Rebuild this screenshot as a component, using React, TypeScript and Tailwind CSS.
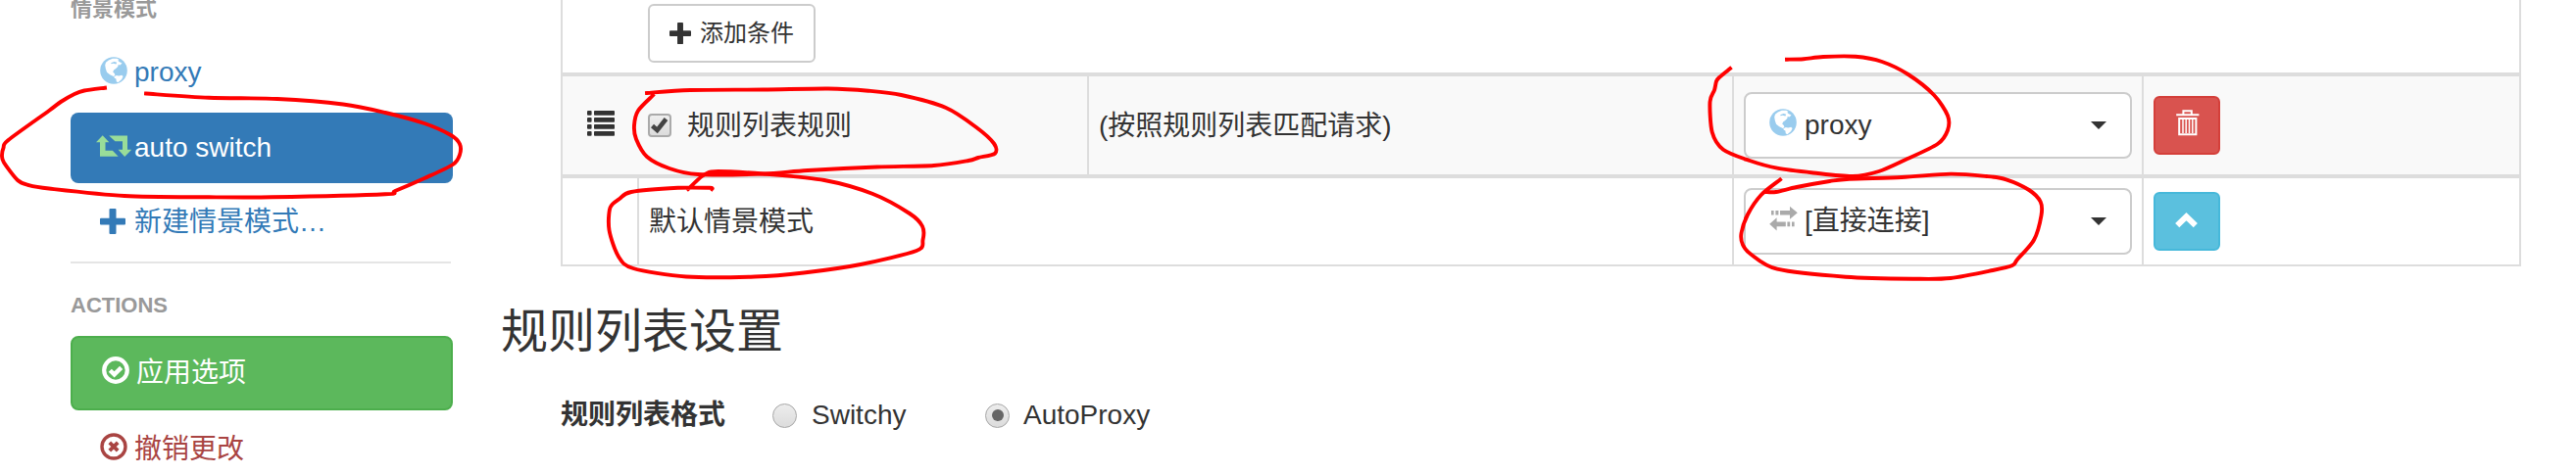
import React from "react";

type Point = [number, number];

function smooth(points: Point[]): string {
  const parts = [`M${points[0][0]} ${points[0][1]}`];
  for (let i = 0; i < points.length - 1; i++) {
    const a = points[Math.max(i - 1, 0)];
    const b = points[i];
    const c = points[i + 1];
    const d = points[Math.min(i + 2, points.length - 1)];
    const k = 7;
    parts.push(
      `C${b[0] + (c[0] - a[0]) / k} ${b[1] + (c[1] - a[1]) / k} ${c[0] - (d[0] - b[0]) / k} ${c[1] - (d[1] - b[1]) / k} ${c[0]} ${c[1]}`
    );
  }
  return parts.join(" ");
}

const marks: Point[][] = [
  [[107, 89.7], [86, 92.5], [76, 96], [62, 104], [50, 113], [8.5, 143], [3.5, 151], [2, 159], [4, 166], [18, 184], [29, 189], [50, 192.5], [127, 200], [213, 201.3], [277, 201.3], [393, 198.3], [403, 195], [433, 182], [462, 168], [469, 158], [469, 147], [460, 138], [433, 126], [393, 115], [350, 106.5], [283, 101], [213, 99.8], [149, 95.5]],
  [[660, 95], [704, 92], [778.5, 91.5], [845, 90.5], [886, 92.7], [919.5, 97], [965, 110], [996, 130], [1014, 146.5], [1015, 156.7], [998, 161], [988, 164], [952.6, 169], [894.6, 170.5], [824, 174], [778.5, 177.5], [712, 178], [683, 172], [660, 160], [649, 142], [647, 128], [651, 113], [666, 97.5]],
  [[702, 193], [716, 180], [725.5, 175.3], [745, 175.3], [778.5, 177.5], [841, 184], [890.5, 198], [928, 218], [941, 231], [941.5, 245], [935, 256], [878, 270], [820, 278.5], [770, 282.5], [700, 282.5], [646, 274], [631, 262], [621.5, 235], [622.5, 212], [632, 203], [644, 196], [691.5, 191.8], [724, 191.8], [726, 193]],
  [[1765, 70], [1754, 79], [1751, 83], [1749, 92], [1744.5, 104], [1746.7, 135], [1758, 152.7], [1785, 164], [1813, 171.7], [1850, 176.5], [1890, 180], [1916.7, 175], [1943, 163.5], [1976.7, 147], [1987, 133], [1987, 118], [1973, 97], [1946.7, 76], [1920, 63], [1893, 57.8], [1860, 58], [1840, 60.3], [1823, 60.7]],
  [[1816, 183.5], [1796.7, 199], [1783, 219], [1776.5, 238], [1778, 250], [1786.7, 260], [1813, 274.7], [1883, 282.7], [1953, 284.7], [1990, 284], [2033, 276], [2053, 271], [2058, 265], [2075, 245], [2082.5, 220], [2081.7, 206], [2070, 194], [2046.7, 183.3], [2026.7, 180], [1990, 177.6], [1940, 181], [1886.7, 182.7], [1866.7, 185], [1833, 191], [1812, 196], [1801, 196]],
];

function Marks() {
  return (
    <svg className="pointer-events-none absolute left-0 top-0" width="2628" height="485" viewBox="0 0 2628 485" fill="none" stroke="#ff0000" strokeWidth="3.9" strokeLinecap="square" strokeLinejoin="round">
      {marks.map((m, i) => (
        <path key={i} d={smooth(m)} />
      ))}
    </svg>
  );
}

function Globe() {
  return (
    <svg className="shrink-0" width="28" height="28" viewBox="0 0 28 28">
      <circle cx="14" cy="14" r="13.8" fill="#99ccee" />
      <path fill="#fff" d="M6 5.8 8.8 3.4l4-1.7 4.6.1L19.6 3l-1.4.8 1.3 1.2 3 1.4-2 2-1.8-.4-.4 2-2.4 2.2-1.8 1.2-.9 2.1 1.6 1.6.6 2-1.6.8-3.6-1.7L7 15.8 5.8 12 5.2 8.4Z" />
      <path fill="#99ccee" d="M11.2 6.2 14.6 5l2.6.8-.8 1.6-2.6-.7-2.2.5Z" />
      <path fill="#fff" d="m14.4 20.2 2.4-1.3 2.4.6 3-.8 1.4 1.4-1.4 3-3.8 3.2-1.6-1-.4-2.7-1.8-1Z" />
    </svg>
  );
}

function Retweet() {
  return (
    <svg className="shrink-0" width="36" height="22" viewBox="0 0 36 22" fill="#99dd99">
      <path d="M6.7.2 13.3 7.3H9.5v8.4h7.3l5.9 6.1H4V7.3H0Z" />
      <path d="M13.2.4H32v14.3h4.2l-7 7.2-6.6-7.2H27V6.3h-7.6Z" />
    </svg>
  );
}

function Plus({ size }: { size: number }) {
  return (
    <svg className="shrink-0" width={size} height={size} viewBox="0 0 26 26" fill="currentColor">
      <path d="M10.5 0h5q1 0 1 1v8.8H25q1 0 1 1v4.6q0 1-1 1h-8.5V25q0 1-1 1h-5q-1 0-1-1v-8.6H1q-1 0-1-1v-4.6q0-1 1-1h8.5V1q0-1 1-1Z" />
    </svg>
  );
}

function Circled({ kind }: { kind: "ok" | "remove" }) {
  return (
    <svg className="shrink-0" width="28" height="28" viewBox="0 0 28 28" fill="none" stroke="currentColor">
      <circle cx="14" cy="14" r={kind === "ok" ? 11.8 : 12} strokeWidth={kind === "ok" ? 4.2 : 3.4} />
      {kind === "ok" ? (
        <path d="M8.3 14.2 12.6 18.4 19.7 11.4" strokeWidth="4.4" />
      ) : (
        <path d="M9.8 9.8 18.2 18.2M18.2 9.8 9.8 18.2" strokeWidth="3.8" />
      )}
    </svg>
  );
}

function Transfer() {
  return (
    <svg className="shrink-0" width="29" height="26" viewBox="0 0 29 26" fill="#aaaaaa">
      <path d="M2 5h2.6v4.6H2ZM6.4 5h3v4.6h-3ZM11 5h10V.7L28.8 7.3 21 13.8V9.6H11Z" />
      <path d="M18.4 21.2v-4.8h2.8v4.8ZM23 21.2v-4.8h2.6v4.8ZM16.8 21.2H7.6v4.2L.2 18.8 7.6 12.3v4.1h9.2Z" />
    </svg>
  );
}

function ListIcon() {
  return (
    <svg className="ml-[25px]" width="28" height="26" viewBox="0 0 28 26" fill="#333">
      {[0, 7, 14, 21].map((y) => (
        <g key={y}>
          <rect x="0" y={y} width="4.6" height="4.8" rx="1" />
          <rect x="7" y={y} width="21" height="4.8" rx="0.8" />
        </g>
      ))}
    </svg>
  );
}

function Trash() {
  return (
    <svg width="24" height="27" viewBox="0 0 24 27" fill="none" stroke="#fff" strokeWidth="2">
      <path d="M.2 5.2H23.4M7.4 5V1.2H15.8V5" />
      <path d="M3.2 8.9H20.4V25.2H3.2Z" />
      <path d="M7 10v14M10.2 10v14M13.5 10v14M16.8 10v14" strokeWidth="1.5" />
    </svg>
  );
}

function Select({ icon, children }: { icon: React.ReactNode; children: React.ReactNode }) {
  return (
    <button className="flex h-[68px] w-[396px] items-center rounded-lg border-2 border-[#ccc] bg-white pl-[24px] pr-[24px] text-left">
      <span className="-mt-[6px] flex h-7 w-[36px] items-center">{icon}</span>
      <span className="flex-1">{children}</span>
      <svg width="16" height="8" viewBox="0 0 16 8" fill="#333">
        <path d="M0 0h16L8 8Z" />
      </svg>
    </button>
  );
}

function Radio({ checked }: { checked?: boolean }) {
  return (
    <span className="flex size-[25px] items-center justify-center rounded-full border border-[#a6a6a6] bg-linear-to-b from-[#ededed] to-[#dcdcdc]">
      {checked && <span className="size-[12px] rounded-full bg-[#666]" />}
    </span>
  );
}

function Sidebar() {
  return (
    <aside className="ml-[72px] flex w-[390px] shrink-0 flex-col">
      <h4 className="-mt-[7px] h-[32px] shrink-0 text-[22px] leading-[32px] font-bold text-[#999]">情景模式</h4>
      <a className="mt-[13px] flex h-[72px] shrink-0 items-center pl-[30px] text-[#337ab7]">
        <span className="-mt-[4px] w-[35px]"><Globe /></span>
        proxy
      </a>
      <a className="mt-[5px] flex h-[72px] shrink-0 items-center rounded-lg bg-[#337ab7] pl-[26px] text-white">
        <span className="-mt-[4px] w-[39px]"><Retweet /></span>
        auto switch
      </a>
      <a className="mt-[4px] flex h-[72px] shrink-0 items-center pl-[30px] text-[#337ab7]">
        <span className="-mt-[3px] w-[35px]"><Plus size={26} /></span>
        新建情景模式…
      </a>
      <hr className="mt-[4px] h-[2px] w-[388px] shrink-0 border-0 bg-[#e5e5e5]" />
      <h4 className="mt-[27px] h-[32px] shrink-0 text-[22px] leading-[32px] font-bold text-[#999]">ACTIONS</h4>
      <a className="mt-[15px] flex h-[76px] shrink-0 items-center rounded-lg border-2 border-[#4cae4c] bg-[#5cb85c] pl-[30px] text-white">
        <span className="-mt-[6px] w-[35px]"><Circled kind="ok" /></span>
        应用选项
      </a>
      <a className="mt-[4px] flex h-[72px] shrink-0 items-center pl-[30px] text-[#a94442]">
        <span className="-mt-[6px] w-[35px]"><Circled kind="remove" /></span>
        撤销更改
      </a>
    </aside>
  );
}

function Rules() {
  return (
    <div className="ml-[60px] flex h-[272px] w-[2000px] shrink-0 flex-col border-2 border-t-0 border-[#ddd]">
      <div className="flex h-[74px] shrink-0 pt-[4px] pl-[87px]">
        <button className="flex h-[60px] w-[171px] items-center rounded-md border-2 border-[#ccc] bg-white pl-5 text-[24px]">
          <span className="-mt-px w-[31px]"><Plus size={22} /></span>
          添加条件
        </button>
      </div>
      <div className="flex h-[108px] shrink-0 border-y-4 border-[#ddd] bg-[#f9f9f9]">
        <div className="flex w-[535px] items-center">
          <span className="-mt-[4px] w-[87px]"><ListIcon /></span>
          <span className="flex size-[24px] items-center justify-center rounded-[4px] border-2 border-[#aaa] bg-linear-to-b from-[#eee] to-[#dcdcdc]">
            <svg width="18" height="18" viewBox="0 0 18 18" fill="none" stroke="#444" strokeWidth="4.6">
              <path d="M1.5 9.5 6.5 14 15.5 2.5" />
            </svg>
          </span>
          <span className="ml-[16px] pt-[2px]">规则列表规则</span>
        </div>
        <div className="flex w-[658px] items-center border-l-2 border-[#ddd] pt-[2px] pl-[10px]">(按照规则列表匹配请求)</div>
        <div className="flex w-[418px] items-center border-l-2 border-[#ddd] pl-[10px]">
          <Select icon={<Globe />}>proxy</Select>
        </div>
        <div className="flex flex-1 items-center border-l-2 border-[#ddd] pl-[10px]">
          <button className="flex h-[60px] w-[68px] items-center justify-center rounded-md border-2 border-[#d43f3a] bg-[#d9534f] pl-[2px] pb-[5px]">
            <Trash />
          </button>
        </div>
      </div>
      <div className="flex flex-1">
        <div className="w-[76px]" />
        <div className="flex w-[1117px] items-center border-l-2 border-[#ddd] pt-[2px] pl-[10px]">默认情景模式</div>
        <div className="flex w-[418px] items-center border-l-2 border-[#ddd] pl-[10px]">
          <Select icon={<Transfer />}>[直接连接]</Select>
        </div>
        <div className="flex flex-1 items-center border-l-2 border-[#ddd] pl-[10px]">
          <button className="flex h-[60px] w-[68px] items-center justify-center rounded-md border-2 border-[#46b8da] bg-[#5bc0de] pb-[3px] pr-[1px]">
            <svg width="23" height="16" viewBox="0 0 23 16" fill="none" stroke="#fff" strokeWidth="6">
              <path d="M2.2 13.2 11.5 4.2 20.8 13.2" />
            </svg>
          </button>
        </div>
      </div>
    </div>
  );
}

export default function App() {
  return (
    <div className="relative flex h-[485px] w-[2628px] overflow-hidden bg-white font-['Liberation_Sans','Noto_Sans_CJK_SC',sans-serif] text-[28px] leading-[40px] text-[#333]">
      <Sidebar />
      <main className="ml-[49px] flex w-[2080px] flex-col pl-px">
        <Rules />
        <h3 className="-ml-px mt-[39px] h-[56px] shrink-0 text-[48px] leading-[56px]">规则列表设置</h3>
        <div className="mt-[37px] flex h-[40px] shrink-0 items-center pl-[60px]">
          <span className="w-[216px] font-bold">规则列表格式</span>
          <span className="flex w-[217px] items-center gap-[15px]">
            <Radio />
            Switchy
          </span>
          <span className="flex items-center gap-[14px]">
            <Radio checked />
            AutoProxy
          </span>
        </div>
      </main>
      <Marks />
    </div>
  );
}
